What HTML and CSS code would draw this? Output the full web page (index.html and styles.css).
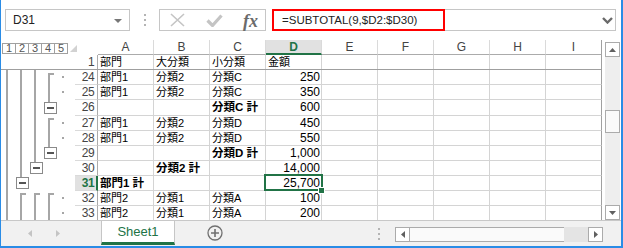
FILE: index.html
```html
<!DOCTYPE html>
<html lang="ja">
  <head>
    <meta charset="UTF-8" />
    <title>Book1 - Excel</title>
    <link rel="stylesheet" href="styles.css">
  </head>
  <body>
    <div class="window">
      <div class="formula-bar">
        <div class="name-box">
          <span>D31</span>
          <svg class="name-arrow" width="8" height="4" viewBox="0 0 8 4"><path d="M0 0h8L4 4z" fill="#777"/></svg>
        </div>
        <div class="grip"><i></i><i></i><i></i></div>
        <div class="fx-buttons">
          <svg class="icon-cancel" width="15" height="14" viewBox="0 0 15 14"><path d="M1 1L14 13M14 1L1 13" stroke="#c4c4c4" stroke-width="1.6" fill="none"/></svg>
          <svg class="icon-enter" width="17" height="13" viewBox="0 0 17 13"><path d="M1.5 6.5l5 5L15.5 1.5" stroke="#c4c4c4" stroke-width="3.2" fill="none"/></svg>
          <span class="fx">fx</span>
        </div>
        <div class="formula-input">
          <span class="formula-text">=SUBTOTAL(9,$D2:$D30)</span>
          <svg class="chevron" width="11" height="7" viewBox="0 0 11 7"><path d="M1 1l4.5 4.5L10 1" stroke="#6a6a6a" stroke-width="2.4" fill="none"/></svg>
          <div class="highlight"></div>
        </div>
      </div>

      <div class="grid-area">
        <div class="sheet">
          <div class="head-row">
            <div class="corner">
              <div class="levels">
                <span>1</span><span>2</span><span>3</span><span>4</span><span>5</span>
              </div>
              <div class="select-all"></div>
            </div>
            <div class="col-head">A</div>
            <div class="col-head">B</div>
            <div class="col-head">C</div>
            <div class="col-head active">D</div>
            <div class="col-head">E</div>
            <div class="col-head">F</div>
            <div class="col-head">G</div>
            <div class="col-head">H</div>
            <div class="col-head last">I</div>
          </div>

          <div class="row frozen">
            <div class="gutter"></div>
            <div class="row-head">1</div>
            <div class="cell">部門</div>
            <div class="cell">大分類</div>
            <div class="cell">小分類</div>
            <div class="cell">金額</div>
            <div class="cell"></div><div class="cell"></div><div class="cell"></div><div class="cell"></div><div class="cell last"></div>
          </div>

          <div class="body">
            <svg class="outline" width="74" height="151" viewBox="1 69 74 151">
              <g fill="#a6a6a6">
                <rect x="6" y="69" width="2" height="151"/>
                <rect x="20" y="69" width="2" height="107"/>
                <rect x="34" y="69" width="2" height="92"/>
                <rect x="48" y="72" width="2" height="29"/>
                <rect x="48" y="72" width="6" height="2"/>
                <rect x="48" y="117" width="2" height="29"/>
                <rect x="48" y="117" width="6" height="2"/>
                <rect x="20" y="192" width="2" height="28"/>
                <rect x="20" y="192" width="6" height="2"/>
                <rect x="34" y="192" width="2" height="28"/>
                <rect x="34" y="192" width="6" height="2"/>
                <rect x="48" y="192" width="2" height="28"/>
                <rect x="48" y="192" width="6" height="2"/>
                <rect x="62" y="75" width="2" height="2"/>
                <rect x="62" y="90" width="2" height="2"/>
                <rect x="62" y="121" width="2" height="2"/>
                <rect x="62" y="136" width="2" height="2"/>
                <rect x="62" y="196" width="2" height="2"/>
                <rect x="62" y="211" width="2" height="2"/>
              </g>
              <g fill="#fff" stroke="#8a8a8a">
                <rect x="44.5" y="101.5" width="12" height="11"/>
                <rect x="44.5" y="146.5" width="12" height="11"/>
                <rect x="30.5" y="161.5" width="12" height="11"/>
                <rect x="16.5" y="176.5" width="12" height="11"/>
              </g>
              <g fill="#555">
                <rect x="47" y="106" width="7" height="2"/>
                <rect x="47" y="151" width="7" height="2"/>
                <rect x="33" y="166" width="7" height="2"/>
                <rect x="19" y="181" width="7" height="2"/>
              </g>
            </svg>

            <div class="rows">
              <div class="row">
                <div class="row-head">24</div>
                <div class="cell">部門1</div><div class="cell">分類2</div><div class="cell">分類C</div><div class="cell num">250</div>
                <div class="cell"></div><div class="cell"></div><div class="cell"></div><div class="cell"></div><div class="cell last"></div>
              </div>
              <div class="row">
                <div class="row-head">25</div>
                <div class="cell">部門1</div><div class="cell">分類2</div><div class="cell">分類C</div><div class="cell num">350</div>
                <div class="cell"></div><div class="cell"></div><div class="cell"></div><div class="cell"></div><div class="cell last"></div>
              </div>
              <div class="row tall">
                <div class="row-head">26</div>
                <div class="cell"></div><div class="cell"></div><div class="cell bold">分類C 計</div><div class="cell num">600</div>
                <div class="cell"></div><div class="cell"></div><div class="cell"></div><div class="cell"></div><div class="cell last"></div>
              </div>
              <div class="row">
                <div class="row-head">27</div>
                <div class="cell">部門1</div><div class="cell">分類2</div><div class="cell">分類D</div><div class="cell num">450</div>
                <div class="cell"></div><div class="cell"></div><div class="cell"></div><div class="cell"></div><div class="cell last"></div>
              </div>
              <div class="row">
                <div class="row-head">28</div>
                <div class="cell">部門1</div><div class="cell">分類2</div><div class="cell">分類D</div><div class="cell num">550</div>
                <div class="cell"></div><div class="cell"></div><div class="cell"></div><div class="cell"></div><div class="cell last"></div>
              </div>
              <div class="row">
                <div class="row-head">29</div>
                <div class="cell"></div><div class="cell"></div><div class="cell bold">分類D 計</div><div class="cell num">1,000</div>
                <div class="cell"></div><div class="cell"></div><div class="cell"></div><div class="cell"></div><div class="cell last"></div>
              </div>
              <div class="row">
                <div class="row-head">30</div>
                <div class="cell"></div><div class="cell bold">分類2 計</div><div class="cell"></div><div class="cell num">14,000</div>
                <div class="cell"></div><div class="cell"></div><div class="cell"></div><div class="cell"></div><div class="cell last"></div>
              </div>
              <div class="row">
                <div class="row-head active">31</div>
                <div class="cell bold">部門1 計</div><div class="cell"></div><div class="cell"></div><div class="cell num selected">25,700</div>
                <div class="cell"></div><div class="cell"></div><div class="cell"></div><div class="cell"></div><div class="cell last"></div>
              </div>
              <div class="row">
                <div class="row-head">32</div>
                <div class="cell">部門2</div><div class="cell">分類1</div><div class="cell">分類A</div><div class="cell num">100</div>
                <div class="cell"></div><div class="cell"></div><div class="cell"></div><div class="cell"></div><div class="cell last"></div>
              </div>
              <div class="row">
                <div class="row-head">33</div>
                <div class="cell">部門2</div><div class="cell">分類1</div><div class="cell">分類A</div><div class="cell num">200</div>
                <div class="cell"></div><div class="cell"></div><div class="cell"></div><div class="cell"></div><div class="cell last"></div>
              </div>
            </div>
          </div>
        </div>

        <div class="vscroll">
          <div class="sb-btn"><svg width="7" height="4" viewBox="0 0 7 4"><path d="M0 4L3.5 0 7 4z" fill="#606060"/></svg></div>
          <div class="sb-track">
            <div class="sb-thumb-v"></div>
          </div>
          <div class="sb-btn"><svg width="7" height="4" viewBox="0 0 7 4"><path d="M0 0h7L3.5 4z" fill="#606060"/></svg></div>
        </div>
      </div>

      <div class="tab-bar">
        <div class="tab-nav">
          <svg width="4" height="7" viewBox="0 0 4 7"><path d="M4 0v7L0 3.5z" fill="#c4c4c4"/></svg>
          <svg width="4" height="7" viewBox="0 0 4 7"><path d="M0 0v7L4 3.5z" fill="#c4c4c4"/></svg>
        </div>
        <div class="sheet-tab">Sheet1</div>
        <div class="add-sheet">
          <svg width="16" height="16" viewBox="0 0 16 16"><circle cx="8" cy="8" r="7" fill="none" stroke="#707070" stroke-width="1.3"/><path d="M8 4v8M4 8h8" stroke="#707070" stroke-width="1.6"/></svg>
        </div>
        <div class="grip tab-grip"><i></i><i></i><i></i></div>
        <div class="hscroll">
          <div class="sb-btn"><svg width="4" height="7" viewBox="0 0 4 7"><path d="M4 0v7L0 3.5z" fill="#606060"/></svg></div>
          <div class="sb-thumb-h"></div>
          <div class="sb-rest"></div>
          <div class="sb-btn"><svg width="4" height="7" viewBox="0 0 4 7"><path d="M0 0v7L4 3.5z" fill="#606060"/></svg></div>
        </div>
      </div>
    </div>
  </body>
</html>
```

FILE: styles.css
```css
body {
  margin: 0;
  background: #fff;
  font-family: "Liberation Sans", "Noto Sans CJK JP", sans-serif;
  color: #000;
}

.window {
  width: 623px;
  height: 248px;
  box-sizing: border-box;
  border-left: 1px solid #2a8ce6;
  border-right: 2px solid #2a8ce6;
  border-bottom: 2px solid #2a8ce6;
  background: #fff;
  display: flex;
  flex-direction: column;
}

/* formula bar */

.formula-bar {
  height: 40px;
  box-sizing: border-box;
  padding: 9px 0 0 4px;
  display: flex;
  align-items: flex-start;
}

.name-box {
  width: 125px;
  height: 22px;
  box-sizing: border-box;
  border: 1px solid #c6c6c6;
  display: flex;
  align-items: center;
  justify-content: space-between;
  padding: 0 7px 0 7px;
  font-size: 12px;
  color: #222;
}

.name-arrow {
  margin-top: 1px;
}

.grip {
  display: flex;
  flex-direction: column;
  gap: 3px;
  margin: 5px 0 0 14px;
}

.grip i {
  display: block;
  width: 2px;
  height: 2px;
  background: #b4b4b4;
}

.fx-buttons {
  width: 107px;
  height: 22px;
  box-sizing: border-box;
  border: 1px solid #c6c6c6;
  margin-left: 13px;
  display: flex;
  align-items: center;
  padding-left: 10px;
}

.icon-enter {
  margin-left: 21px;
}

.fx {
  margin-left: 20px;
  font-family: "Liberation Serif", serif;
  font-style: italic;
  font-weight: bold;
  font-size: 18px;
  color: #6b6b6b;
  line-height: 1;
  margin-top: 1px;
}

.formula-input {
  position: relative;
  width: 344px;
  height: 22px;
  box-sizing: border-box;
  border: 1px solid #c6c6c6;
  margin-left: 6px;
  display: flex;
  align-items: center;
  justify-content: space-between;
  padding: 0 2px 0 9px;
}

.formula-text {
  font-size: 11.5px;
  color: #222;
}

.chevron {
  margin-top: 1px;
}

.highlight {
  position: absolute;
  left: -1px;
  top: -1px;
  width: 173px;
  height: 22px;
  border: 2px solid #f00;
  box-sizing: border-box;
}

/* grid */

.grid-area {
  height: 180px;
  display: flex;
}

.sheet {
  width: 601px;
  display: flex;
  flex-direction: column;
}

.head-row {
  height: 15px;
  display: flex;
}

.corner {
  width: 97px;
  display: flex;
  align-items: flex-start;
  padding: 3px 0 0 1px;
  box-sizing: border-box;
}

.levels {
  display: flex;
}

.levels span {
  width: 14px;
  height: 11px;
  box-sizing: border-box;
  border: 1px solid #a0a0a0;
  margin-left: -1px;
  font-size: 11px;
  line-height: 9px;
  text-align: center;
  color: #555;
}

.levels span:first-child {
  margin-left: 0;
}

.select-all {
  width: 0;
  height: 0;
  margin: 2px 0 0 2px;
  border-left: 7px solid transparent;
  border-bottom: 7px solid #d2d2d2;
}

.col-head {
  width: 56px;
  box-sizing: border-box;
  border-right: 1px solid #dadada;
  border-bottom: 1px solid #ababab;
  text-align: center;
  font-size: 12px;
  line-height: 14px;
  color: #444;
}

.col-head.active {
  background: #e1e1e1;
  border-bottom: 2px solid #217346;
  color: #217346;
  font-weight: bold;
}

.col-head.last {
  border-right: 1px solid #a0a0a0;
}

.row {
  display: flex;
  height: 15px;
}

.row.tall {
  height: 16px;
}

.row.frozen {
  height: 14px;
  border-bottom: 1px solid #9f9f9f;
}

.row.frozen .cell,
.row.frozen .row-head {
  border-bottom: none;
}

.gutter {
  width: 74px;
}

.row-head {
  width: 23px;
  box-sizing: border-box;
  border-right: 1px solid #ababab;
  border-bottom: 1px solid #dadada;
  text-align: right;
  padding-right: 3px;
  font-size: 12px;
  line-height: 14px;
  letter-spacing: -0.6px;
  color: #444;
}

.row-head.active {
  background: #e1e1e1;
  border-right: 2px solid #217346;
  padding-right: 2px;
  color: #217346;
  font-weight: bold;
}

.cell {
  width: 56px;
  box-sizing: border-box;
  border-right: 1px solid #d4d4d4;
  border-bottom: 1px solid #d4d4d4;
  padding-left: 2px;
  font-size: 11px;
  line-height: 14px;
  white-space: nowrap;
}

.cell.last {
  border-right-color: #a0a0a0;
}

.cell.bold {
  font-weight: bold;
  font-size: 11.5px;
}

.cell.num {
  text-align: right;
  padding: 0 1px 0 0;
  font-size: 12px;
}

.cell.selected {
  position: relative;
}

.cell.selected::before {
  content: "";
  position: absolute;
  left: -2px;
  top: -2px;
  right: -2px;
  bottom: -1px;
  border: 2px solid #217346;
}

.cell.selected::after {
  content: "";
  position: absolute;
  right: -4px;
  bottom: -4px;
  width: 5px;
  height: 5px;
  background: #217346;
  border: 1px solid #fff;
}

.body {
  display: flex;
}

.outline {
  display: block;
  flex: none;
}

.rows {
  display: flex;
  flex-direction: column;
}

/* scrollbars */

.vscroll {
  width: 15px;
  margin: 2px 0 0 3px;
  display: flex;
  flex-direction: column;
  height: 178px;
}

.sb-btn {
  width: 15px;
  height: 15px;
  box-sizing: border-box;
  border: 1px solid #ababab;
  background: #fff;
  display: flex;
  align-items: center;
  justify-content: center;
  flex: none;
}

.sb-track {
  flex: 1;
  background: #eeeeee;
  padding-top: 53px;
}

.sb-thumb-v {
  height: 23px;
  box-sizing: border-box;
  border: 1px solid #ababab;
  background: #fafafa;
}

.tab-bar {
  height: 26px;
  box-sizing: border-box;
  border-top: 1px solid #c8c8c8;
  background: #f1f1f1;
  display: flex;
  align-items: flex-start;
}

.tab-nav {
  display: flex;
  gap: 24px;
  margin: 9px 0 0 27px;
}

.sheet-tab {
  width: 74px;
  height: 24px;
  box-sizing: border-box;
  margin-left: 41px;
  background: #fff;
  border-left: 1px solid #c6c6c6;
  border-right: 1px solid #c6c6c6;
  border-bottom: 3px solid #217346;
  text-align: center;
  font-size: 13px;
  line-height: 22px;
  color: #217346;
}

.add-sheet {
  margin: 4px 0 0 32px;
  height: 16px;
}

.add-sheet svg {
  display: block;
}

.tab-grip {
  margin: 7px 0 0 155px;
}

.hscroll {
  display: flex;
  margin: 6px 0 0 15px;
  height: 15px;
}

.sb-thumb-h {
  width: 154px;
  box-sizing: border-box;
  border-top: 1px solid #ababab;
  border-bottom: 1px solid #ababab;
  background: #fafafa;
}

.sb-rest {
  width: 24px;
  background: #e4e4e4;
}
```
